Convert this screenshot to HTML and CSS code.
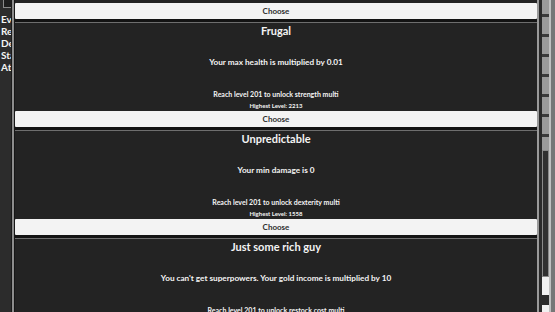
FILE: index.html
```html
<!DOCTYPE html>
<html>
<head>
<meta charset="utf-8">
<link rel="stylesheet" href="styles.css">
</head>
<body>
<div class="app">
  <nav class="sidebar">
    <div class="side-box"></div>
    <div class="side-item">Events</div>
    <div class="side-item">Rebirth</div>
    <div class="side-item">Debug</div>
    <div class="side-item">Stats</div>
    <div class="side-item">Attributes</div>
  </nav>
  <div class="divider"></div>
  <main class="list">
    <div class="card partial">
      <button class="choose">Choose</button>
    </div>
    <div class="card">
      <div class="title">Frugal</div>
      <div class="desc">Your max health is multiplied by 0.01</div>
      <div class="reach">Reach level 201 to unlock strength multi</div>
      <div class="highest">Highest Level: 2213</div>
      <button class="choose">Choose</button>
    </div>
    <div class="card">
      <div class="title">Unpredictable</div>
      <div class="desc">Your min damage is 0</div>
      <div class="reach">Reach level 201 to unlock dexterity multi</div>
      <div class="highest">Highest Level: 1558</div>
      <button class="choose">Choose</button>
    </div>
    <div class="card">
      <div class="title">Just some rich guy</div>
      <div class="desc">You can't get superpowers. Your gold income is multiplied by 10</div>
      <div class="reach">Reach level 201 to unlock restock cost multi</div>
      <div class="highest">Highest Level: 1204</div>
      <button class="choose">Choose</button>
    </div>
  </main>
  <div class="divider right"></div>
  <div class="scroll">
    <div class="scroll-gap"></div>
    <div class="scroll-track">
      <div class="seg arrows"></div>
      <div class="seg thumb"></div>
      <div class="seg light"></div>
      <div class="seg dark"></div>
      <div class="seg light grow"></div>
    </div>
    <div class="scroll-edge"></div>
  </div>
</div>
</body>
</html>
```

FILE: styles.css
```css
html, body {
  margin: 0;
  padding: 0;
  background: #151515;
  overflow: hidden;
}
body {
  font-family: "Lato", "Open Sans", sans-serif;
  font-weight: 700;
  color: #f4f4f4;
}
.app {
  display: flex;
  width: 555px;
  height: 312px;
  overflow: hidden;
}
.sidebar {
  width: 11px;
  flex: none;
  background: #2c2c2c;
  overflow: hidden;
  border-right: 1px solid #1a1a1a;
}
.side-box {
  margin-left: 3px;
  width: 7px;
  height: 7px;
  border: 1px solid #8a8a8a;
  border-top: none;
  background: #1e1e1e;
  margin-bottom: 5px;
}
.side-item {
  font-size: 10px;
  line-height: 12px;
  white-space: nowrap;
  padding-left: 1px;
}
.divider {
  width: 2px;
  flex: none;
  background: #8d8d8d;
  border-right: 1px solid #161616;
}
.divider.right {
  border-right: none;
  border-left: none;
  background: #9a9a9a;
}
.list {
  flex: 1;
  display: flex;
  flex-direction: column;
  padding-left: 0;
  background: #131313;
}
.card {
  background: #232323;
  border-top: 1px solid #6e6e6e;
  display: flex;
  flex-direction: column;
  align-items: center;
  text-align: center;
  margin-bottom: 3px;
  flex: none;
}
.card.partial {
  border-top: none;
  padding-top: 3px;
}
.title {
  font-size: 11px;
  line-height: 16px;
}
.desc {
  font-size: 8.2px;
  line-height: 12px;
  margin-top: 17px;
}
.reach {
  font-size: 7px;
  line-height: 8px;
  margin-top: 22px;
}
.highest {
  font-size: 6px;
  line-height: 7px;
  margin-top: 4px;
}
.choose {
  align-self: stretch;
  height: 16px;
  margin-top: 2px;
  padding: 0;
  border: none;
  border-radius: 1px;
  background: #f3f3f3;
  color: #2e2e2e;
  font-family: "Lato", "Open Sans", sans-serif;
  font-weight: 700;
  font-size: 8px;
}
.card.partial .choose {
  margin-top: 0;
}
.scroll {
  width: 16px;
  flex: none;
  display: flex;
  background: #7a7a7a;
}
.scroll-gap {
  width: 3px;
  background: #2a2a2a;
}
.scroll-track {
  width: 7px;
  display: flex;
  flex-direction: column;
}
.seg.arrows {
  height: 150px;
  background: repeating-linear-gradient(180deg, #9a9a9a 0 14px, #3a3a3a 14px 17px, #9a9a9a 17px 20px);
}
.seg.thumb {
  height: 127px;
  background: #303030;
  border: 1px solid #8a8a8a;
  box-sizing: border-box;
}
.seg.light {
  height: 18px;
  background: #f0f0f0;
}
.seg.dark {
  height: 10px;
  background: #2a2a2a;
}
.seg.grow {
  flex: 1;
}
.scroll-edge {
  width: 2px;
  background: #c0c0c0;
  border-right: 4px solid #777;
}
```
